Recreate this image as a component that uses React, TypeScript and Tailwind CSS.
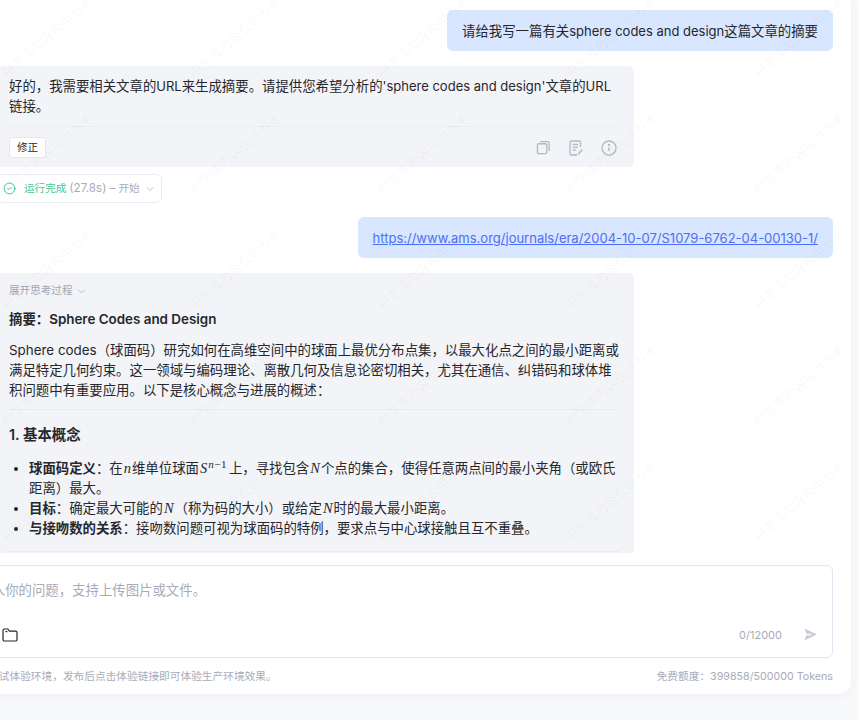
import { ChevronDown, CircleCheck } from "lucide-react";

const marks = Array.from({ length: 30 });

const Watermark = () => (
  <div className="absolute left-[13px] -top-[21px] grid grid-cols-[repeat(5,188px)] auto-rows-[116px] pointer-events-none">
    {marks.map((_, i) => (
      <div key={i} className="flex items-center justify-center">
        <span className="rotate-[-40deg] whitespace-nowrap text-[13px] text-black/[0.04]">AI生成内容仅供参考</span>
      </div>
    ))}
  </div>
);

const CopyIcon = () => (
  <svg width="15" height="15" viewBox="0 0 16 16" fill="none" stroke="#b4b6c4" strokeWidth="1.4">
    <rect x="1.5" y="4" width="10" height="10.5" rx="1.2" />
    <path d="M4.5 1.8h8.3a1.2 1.2 0 0 1 1.2 1.2v8.5" />
  </svg>
);

const NoteIcon = () => (
  <svg width="16" height="16" viewBox="0 0 16 16" fill="none" stroke="#b4b6c4" strokeWidth="1.3">
    <path d="M9 15H3.2A1.2 1.2 0 0 1 2 13.8V2.2A1.2 1.2 0 0 1 3.2 1h8.1a1.2 1.2 0 0 1 1.2 1.2V7" />
    <path d="M4.6 4.5h5.4M4.6 7.3h5.4M4.6 10.1h3.4M10 14.5l4.4-5" />
  </svg>
);

const InfoIcon = () => (
  <svg width="16" height="16" viewBox="0 0 16 16" fill="none" stroke="#b4b6c4" strokeWidth="1.3">
    <circle cx="8" cy="8" r="7" />
    <path d="M8 7.2v4" />
    <circle cx="8" cy="4.9" r="0.5" fill="#b4b6c4" />
  </svg>
);

const FolderIcon = () => (
  <svg width="16" height="14" viewBox="0 0 16 14" fill="none" stroke="#26272e" strokeWidth="1.2">
    <path d="M1 2.4A1.4 1.4 0 0 1 2.4 1h3.4l1.7 2.2h6.1a1.4 1.4 0 0 1 1.4 1.4v7a1.4 1.4 0 0 1-1.4 1.4H2.4A1.4 1.4 0 0 1 1 11.6z" />
    <path d="M3.4 3.6h2" />
  </svg>
);

const SendIcon = () => (
  <svg width="13" height="13" viewBox="0 0 13 13" fill="#c9cbd8">
    <path d="M0.5 0.5L12.8 6.5L0.5 12.5L2.4 7.3H7V5.7H2.4z" />
  </svg>
);

const M = ({ children }: { children: React.ReactNode }) => (
  <i className="mx-[1px] font-['Liberation_Serif',serif] text-[14.5px]">{children}</i>
);

const L = ({ children }: { children: React.ReactNode }) => <span className="text-[13px]">{children}</span>;

export default function App() {
  return (
    <div className="h-[720px] w-[859px] overflow-hidden bg-[#f8f9fb] font-['Inter','Noto_Sans_CJK_SC',sans-serif] text-[13.4px] text-[#26272e]">
      <div className="-ml-[60px] flex h-[694px] w-[911px] flex-col rounded-br-xl bg-white shadow-[0_2px_10px_rgba(30,40,80,0.05)]">
        <div className="relative h-[553px] shrink-0 overflow-hidden pl-[57px] pr-[18px] pt-2.5 leading-5">
          <div className="flex justify-end">
            <div className="flex h-[41px] items-center rounded-md bg-[#d8e6ff] px-[15px]">
              <span>请给我写一篇有关<L>sphere codes and design</L>这篇文章的摘要</span>
            </div>
          </div>

          <div className="mt-[15px] h-[101px] w-[637px] rounded-md bg-[#f3f4f7] pl-3 pr-[15px] pt-2.5">
            <p>好的，我需要相关文章的<L>URL</L>来生成摘要。请提供您希望分析的<L>'sphere codes and design'</L>文章的<L>URL</L>链接。</p>
            <div className="mt-2.5 flex items-center justify-between border-t border-[#ecedf1] pr-0.5 pt-2.5">
              <button className="flex h-[21px] w-[37px] items-center justify-center rounded-[3px] border border-[#e6e7ec] bg-white text-[10.6px]">
                修正
              </button>
              <div className="flex items-center gap-[17px]">
                <CopyIcon />
                <NoteIcon />
                <InfoIcon />
              </div>
            </div>
          </div>

          <div className="mt-[7px] flex h-[29px] w-[165px] items-center rounded-md border border-[#eaebf0] bg-white pl-[5px] text-[10.6px] text-[#a9abba]">
            <CircleCheck size={13} strokeWidth={1.7} className="text-[#34c08c]" />
            <span className="ml-2 whitespace-nowrap"><span className="text-[#48c795]">运行完成</span> <span className="text-[11.6px]">(27.8s) –</span> 开始</span>
            <ChevronDown size={12} strokeWidth={1.5} className="ml-1" />
          </div>

          <div className="mt-3.5 flex justify-end">
            <div className="flex h-[41px] items-center rounded-md bg-[#d8e6ff] px-[15px]">
              <a href="#" className="text-[13px] text-[#4d6ef5] underline">https://www.ams.org/journals/era/2004-10-07/S1079-6762-04-00130-1/</a>
            </div>
          </div>

          <div className="mt-[15px] h-[300px] w-[637px] rounded-t-md bg-[#f3f4f7] pl-3 pr-[15px] pt-2.5">
            <div className="flex items-center gap-[3px] text-[10.6px] leading-4 text-[#a3a5b4]">
              展开思考过程 <ChevronDown size={11} strokeWidth={1.5} />
            </div>
            <div className="mt-[10px] font-semibold">摘要：Sphere Codes and Design</div>
            <p className="mt-[11px]">Sphere codes（球面码）研究如何在高维空间中的球面上最优分布点集，以最大化点之间的最小距离或满足特定几何约束。这一领域与编码理论、离散几何及信息论密切相关，尤其在通信、纠错码和球体堆积问题中有重要应用。以下是核心概念与进展的概述：</p>
            <div className="mt-[9px] border-t border-[#e9eaee]" />
            <div className="mt-[14px] text-[14.4px] font-semibold leading-[22px]">1. 基本概念</div>
            <ul className="mt-[12px] list-disc pl-5">
              <li><b className="font-semibold">球面码定义</b>：在<M>n</M>维单位球面<M>S</M><sup className="mr-[2px] font-['Liberation_Serif',serif] text-[11px] leading-none tracking-[0.5px]"><i>n</i>−1</sup>上，寻找包含<M>N</M>个点的集合，使得任意两点间的最小夹角（或欧氏距离）最大。</li>
              <li><b className="font-semibold">目标</b>：确定最大可能的<M>N</M>（称为码的大小）或给定<M>N</M>时的最大最小距离。</li>
              <li><b className="font-semibold">与接吻数的关系</b>：接吻数问题可视为球面码的特例，要求点与中心球接触且互不重叠。</li>
            </ul>
            <div className="mt-[13px] border-t border-[#e9eaee]" />
          </div>
          <Watermark />
        </div>

        <div className="pl-[57px] pr-[18px] pt-3">
          <div className="-ml-[45px] flex h-[93px] flex-col justify-between rounded-md border border-[#e3e5f1] pb-[14px] pl-[12px] pr-[15px] pt-[14px]">
            <div className="leading-5 text-[#a9abba]">请输入你的问题，支持上传图片或文件。</div>
            <div className="flex items-center justify-between">
              <div className="ml-[37px]">
                <FolderIcon />
              </div>
              <div className="flex items-center gap-[22px] text-[11px] text-[#a9abba]">
                0/12000
                <SendIcon />
              </div>
            </div>
          </div>
          <div className="-ml-[41px] mt-[11px] flex items-center justify-between text-[10.7px] leading-4 text-[#a9abba]">
            <span>当前为测试体验环境，发布后点击体验链接即可体验生产环境效果。</span>
            <span>免费额度：399858/500000 Tokens</span>
          </div>
        </div>
      </div>
    </div>
  );
}
